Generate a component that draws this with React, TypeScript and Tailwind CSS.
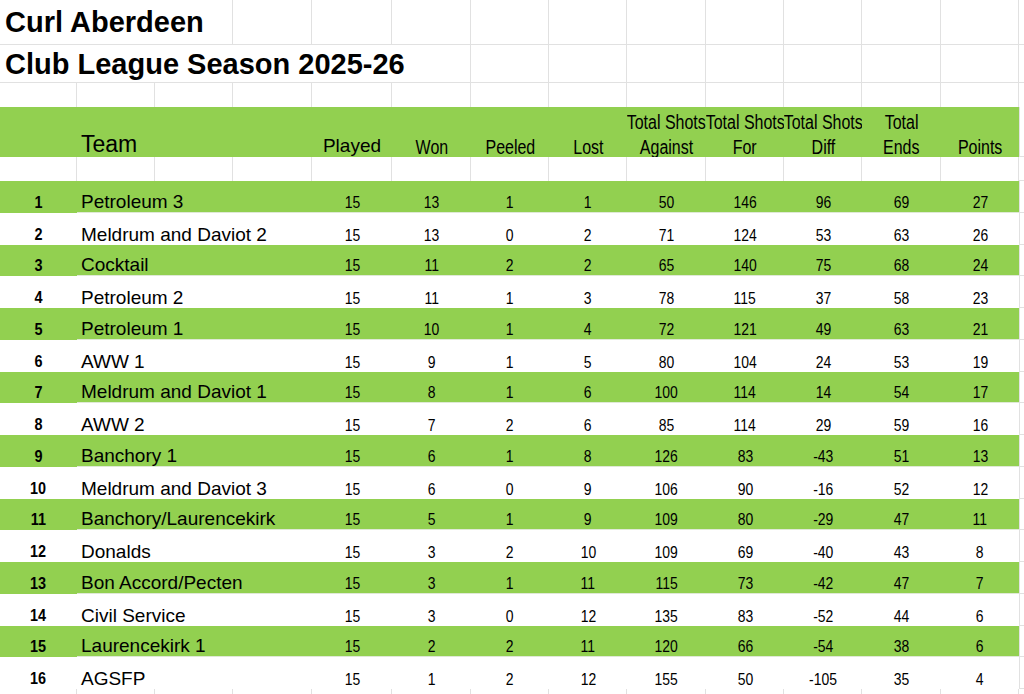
import React from "react";

const GREEN = "bg-[#92d050]";
const LINE = "border-[#e1e1e1]";
const GRID =
  "grid grid-cols-[77px_78px_78px_79px_80px_79px_78px_78px_79px_78px_78px_79px_78px_5px]";
const SANS = "font-['Liberation_Sans',Arial,sans-serif]";
const NARROW = "font-['Liberation_Sans',Arial,sans-serif] inline-block scale-x-[0.82]";

type Row = [number, string, number, number, number, number, number, number, number, number, number];

const rows: Row[] = [
  [1, "Petroleum 3", 15, 13, 1, 1, 50, 146, 96, 69, 27],
  [2, "Meldrum and Daviot 2", 15, 13, 0, 2, 71, 124, 53, 63, 26],
  [3, "Cocktail", 15, 11, 2, 2, 65, 140, 75, 68, 24],
  [4, "Petroleum 2", 15, 11, 1, 3, 78, 115, 37, 58, 23],
  [5, "Petroleum 1", 15, 10, 1, 4, 72, 121, 49, 63, 21],
  [6, "AWW 1", 15, 9, 1, 5, 80, 104, 24, 53, 19],
  [7, "Meldrum and Daviot 1", 15, 8, 1, 6, 100, 114, 14, 54, 17],
  [8, "AWW 2", 15, 7, 2, 6, 85, 114, 29, 59, 16],
  [9, "Banchory 1", 15, 6, 1, 8, 126, 83, -43, 51, 13],
  [10, "Meldrum and Daviot 3", 15, 6, 0, 9, 106, 90, -16, 52, 12],
  [11, "Banchory/Laurencekirk", 15, 5, 1, 9, 109, 80, -29, 47, 11],
  [12, "Donalds", 15, 3, 2, 10, 109, 69, -40, 43, 8],
  [13, "Bon Accord/Pecten", 15, 3, 1, 11, 115, 73, -42, 47, 7],
  [14, "Civil Service", 15, 3, 0, 12, 135, 83, -52, 44, 6],
  [15, "Laurencekirk 1", 15, 2, 2, 11, 120, 66, -54, 38, 6],
  [16, "AGSFP", 15, 1, 2, 12, 155, 50, -105, 35, 4],
];

const heights = ["h-[32px]", "h-[32px]", "h-[31px]", "h-[32px]"];

function EmptyCells({ n }: { n: number }) {
  return (
    <>
      {Array.from({ length: n }).map((_, i) => (
        <div key={i} className={`border-r ${LINE}`} />
      ))}
    </>
  );
}

function HeaderCell({ lines }: { lines: string[] }) {
  return (
    <div className={`${GREEN} flex h-full flex-col justify-end overflow-hidden text-[19.5px] leading-[24.5px] text-black`}>
      <div className="translate-y-[1.5px]">
        {lines.map((l, i) => (
          <div key={i} className="flex justify-center whitespace-nowrap">
            <span className={`${NARROW} whitespace-nowrap`}>{l}</span>
          </div>
        ))}
      </div>
    </div>
  );
}

export default function App() {
  return (
    <div className="w-[1024px] h-[694px] overflow-hidden bg-white text-black">
      {/* Title row 1 */}
      <div className={`${GRID} h-[45px] border-b ${LINE}`}>
        <div className={`col-span-3 border-r ${LINE} pl-[5px] pt-[7.5px]`}>
          <div className={`${SANS} whitespace-nowrap text-[29px] font-bold leading-none`}>Curl Aberdeen</div>
        </div>
        <EmptyCells n={10} />
        <div />
      </div>
      {/* Title row 2 */}
      <div className={`${GRID} h-[38px] border-b ${LINE}`}>
        <div className={`col-span-6 border-r ${LINE} pl-[5px] pt-[4.5px]`}>
          <div className={`${SANS} whitespace-nowrap text-[29px] font-bold leading-none`}>
            Club League Season 2025-26
          </div>
        </div>
        <EmptyCells n={7} />
        <div />
      </div>
      {/* Empty row 3 */}
      <div className={`${GRID} h-[24px]`}>
        <EmptyCells n={13} />
        <div />
      </div>
      {/* Header row */}
      <div className={`${GRID} h-[50px]`}>
        <div className={GREEN} />
        <div className={`${GREEN} col-span-3 flex items-end pl-[4px] pb-[1.5px]`}>
          <span className={`${SANS} text-[23px] leading-none`}>Team</span>
        </div>
        <div className={`${GREEN} flex items-end justify-center pb-[2px]`}>
          <span className={`${SANS} text-[19px] leading-none`}>Played</span>
        </div>
        <HeaderCell lines={["Won"]} />
        <HeaderCell lines={["Peeled"]} />
        <HeaderCell lines={["Lost"]} />
        <HeaderCell lines={["Total Shots", "Against"]} />
        <HeaderCell lines={["Total Shots", "For"]} />
        <HeaderCell lines={["Total Shots", "Diff"]} />
        <HeaderCell lines={["Total", "Ends"]} />
        <HeaderCell lines={["Points"]} />
        <div className={`border-l border-b ${LINE}`} />
      </div>
      {/* Blank row */}
      <div className={`${GRID} h-[24px]`}>
        <EmptyCells n={13} />
        <div className={`border-b ${LINE}`} />
      </div>
      {/* Data rows */}
      {rows.map((r, idx) => {
        const green = idx % 2 === 0;
        const bg = green ? GREEN : "bg-white";
        const cellB = green ? `border-b border-[#dfe9d6]` : "";
        const nums = r.slice(2) as number[];
        return (
          <div key={r[0]} className={`${GRID} ${heights[idx % 4]}`}>
            <div className={`${bg} flex items-end justify-center pb-[2px] pr-[1px]`}>
              <span className={`${SANS} inline-block scale-x-[0.9] text-[16px] font-bold leading-none`}>{r[0]}</span>
            </div>
            <div className={`${bg} ${cellB} col-span-3 flex items-end pl-[4px] pb-[1.5px]`}>
              <span className={`${SANS} whitespace-nowrap text-[19px] leading-none`}>{r[1]}</span>
            </div>
            {nums.map((n, i) => (
              <div key={i} className={`${bg} ${cellB} flex items-end justify-center pb-[1.5px]`}>
                <span className={`${NARROW} text-[17px] leading-none`}>{n}</span>
              </div>
            ))}
            <div className={`border-l border-b ${LINE}`} />
          </div>
        );
      })}
      {/* Bottom partial row */}
      <div className={`${GRID} h-[5px]`}>
        <EmptyCells n={13} />
        <div />
      </div>
    </div>
  );
}
